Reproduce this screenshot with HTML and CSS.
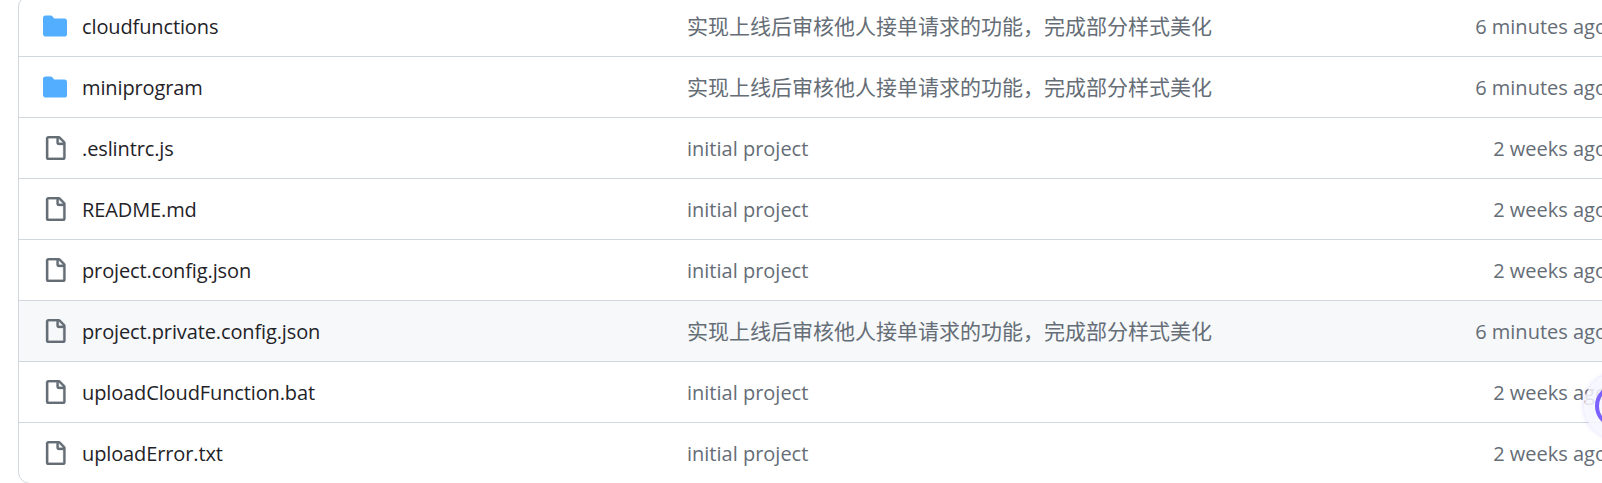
FILE: index.html
```html
<!DOCTYPE html>
<html lang="en">
<head>
    <meta charset="UTF-8">
    <meta name="viewport" content="width=device-width, initial-scale=1.0">
    <title>Repository files</title>
    <link rel="stylesheet" href="styles.css">
</head>
<body>
    <svg class="icon-defs" width="0" height="0">
        <symbol id="folder" viewBox="0 0 16 16">
            <path d="M1.75 1A1.75 1.75 0 0 0 0 2.75v10.5C0 14.216.784 15 1.75 15h12.5A1.75 1.75 0 0 0 16 13.25v-8.5A1.75 1.75 0 0 0 14.25 3H7.5a.25.25 0 0 1-.2-.1l-.9-1.2C6.07 1.26 5.55 1 5 1H1.75Z"/>
        </symbol>
        <symbol id="file" viewBox="0 0 16 16">
            <path d="M2 1.75C2 .784 2.784 0 3.75 0h6.586c.464 0 .909.184 1.237.513l2.914 2.914c.329.328.513.773.513 1.237v9.586A1.75 1.75 0 0 1 13.25 16h-9.5A1.75 1.75 0 0 1 2 14.25Zm1.75-.25a.25.25 0 0 0-.25.25v12.5c0 .138.112.25.25.25h9.5a.25.25 0 0 0 .25-.25V6h-2.75A1.75 1.75 0 0 1 9 4.25V1.5Zm6.75.062V4.25c0 .138.112.25.25.25h2.688l-.011-.013-2.914-2.914-.013-.011Z"/>
        </symbol>
    </svg>

    <div class="file-list">
        <div class="row">
            <svg class="icon folder-icon"><use href="#folder"></use></svg>
            <span class="name">cloudfunctions</span>
            <span class="message cjk">实现上线后审核他人接单请求的功能，完成部分样式美化</span>
            <span class="age">6 minutes ago</span>
        </div>
        <div class="row">
            <svg class="icon folder-icon"><use href="#folder"></use></svg>
            <span class="name">miniprogram</span>
            <span class="message cjk">实现上线后审核他人接单请求的功能，完成部分样式美化</span>
            <span class="age">6 minutes ago</span>
        </div>
        <div class="row">
            <svg class="icon file-icon"><use href="#file"></use></svg>
            <span class="name">.eslintrc.js</span>
            <span class="message">initial project</span>
            <span class="age">2 weeks ago</span>
        </div>
        <div class="row">
            <svg class="icon file-icon"><use href="#file"></use></svg>
            <span class="name">README.md</span>
            <span class="message">initial project</span>
            <span class="age">2 weeks ago</span>
        </div>
        <div class="row">
            <svg class="icon file-icon"><use href="#file"></use></svg>
            <span class="name">project.config.json</span>
            <span class="message">initial project</span>
            <span class="age">2 weeks ago</span>
        </div>
        <div class="row hovered">
            <svg class="icon file-icon"><use href="#file"></use></svg>
            <span class="name">project.private.config.json</span>
            <span class="message cjk">实现上线后审核他人接单请求的功能，完成部分样式美化</span>
            <span class="age">6 minutes ago</span>
        </div>
        <div class="row">
            <svg class="icon file-icon"><use href="#file"></use></svg>
            <span class="name">uploadCloudFunction.bat</span>
            <span class="message">initial project</span>
            <span class="age">2 weeks ago</span>
        </div>
        <div class="row">
            <svg class="icon file-icon"><use href="#file"></use></svg>
            <span class="name">uploadError.txt</span>
            <span class="message">initial project</span>
            <span class="age">2 weeks ago</span>
        </div>
    </div>

    <div class="float-button"><div class="float-ring"></div></div>
</body>
</html>
```

FILE: styles.css
```css
html, body {
    height: 100%;
}

body {
    margin: 0;
    overflow: hidden;
    background-color: white;
    font-family: "Open Sans", "Noto Sans CJK SC", sans-serif;
    font-size: 20px;
    color: #1f2328;
}

.icon-defs {
    display: block;
}

.file-list {
    width: 1620px;
    margin-top: -5px;
    margin-left: 18px;
    box-sizing: border-box;
    border: 1px solid #d0d7de;
    border-radius: 12px;
    overflow: hidden;
}

.row {
    display: grid;
    grid-template-columns: 24px 620px 788px 132px;
    align-items: center;
    height: 60px;
    padding-left: 24px;
    border-top: 1px solid #d0d7de;
}

.row:first-child {
    border-top: none;
}

.row.hovered {
    background: #f6f8fa;
}

.icon {
    width: 24px;
    height: 24px;
}

.folder-icon {
    fill: #54aeff;
}

.file-icon {
    fill: #656d76;
    stroke: #656d76;
    stroke-width: 0.2;
}

.name {
    padding-left: 15px;
    letter-spacing: -0.12px;
}

.message {
    color: #656d76;
}

.message.cjk {
    font-size: 21px;
    padding-bottom: 2px;
}

.age {
    color: #656d76;
    white-space: nowrap;
    text-align: right;
}

.float-button {
    position: absolute;
    left: 1584px;
    top: 373px;
    width: 66px;
    height: 66px;
    border-radius: 50%;
    background: rgba(246, 246, 255, 0.85);
    box-shadow: 0 0 5px rgba(120, 100, 255, 0.25);
    display: flex;
    align-items: center;
    justify-content: center;
}

.float-ring {
    width: 44px;
    height: 44px;
    box-sizing: border-box;
    border: 4px solid #7b61ff;
    border-radius: 50%;
}
```
